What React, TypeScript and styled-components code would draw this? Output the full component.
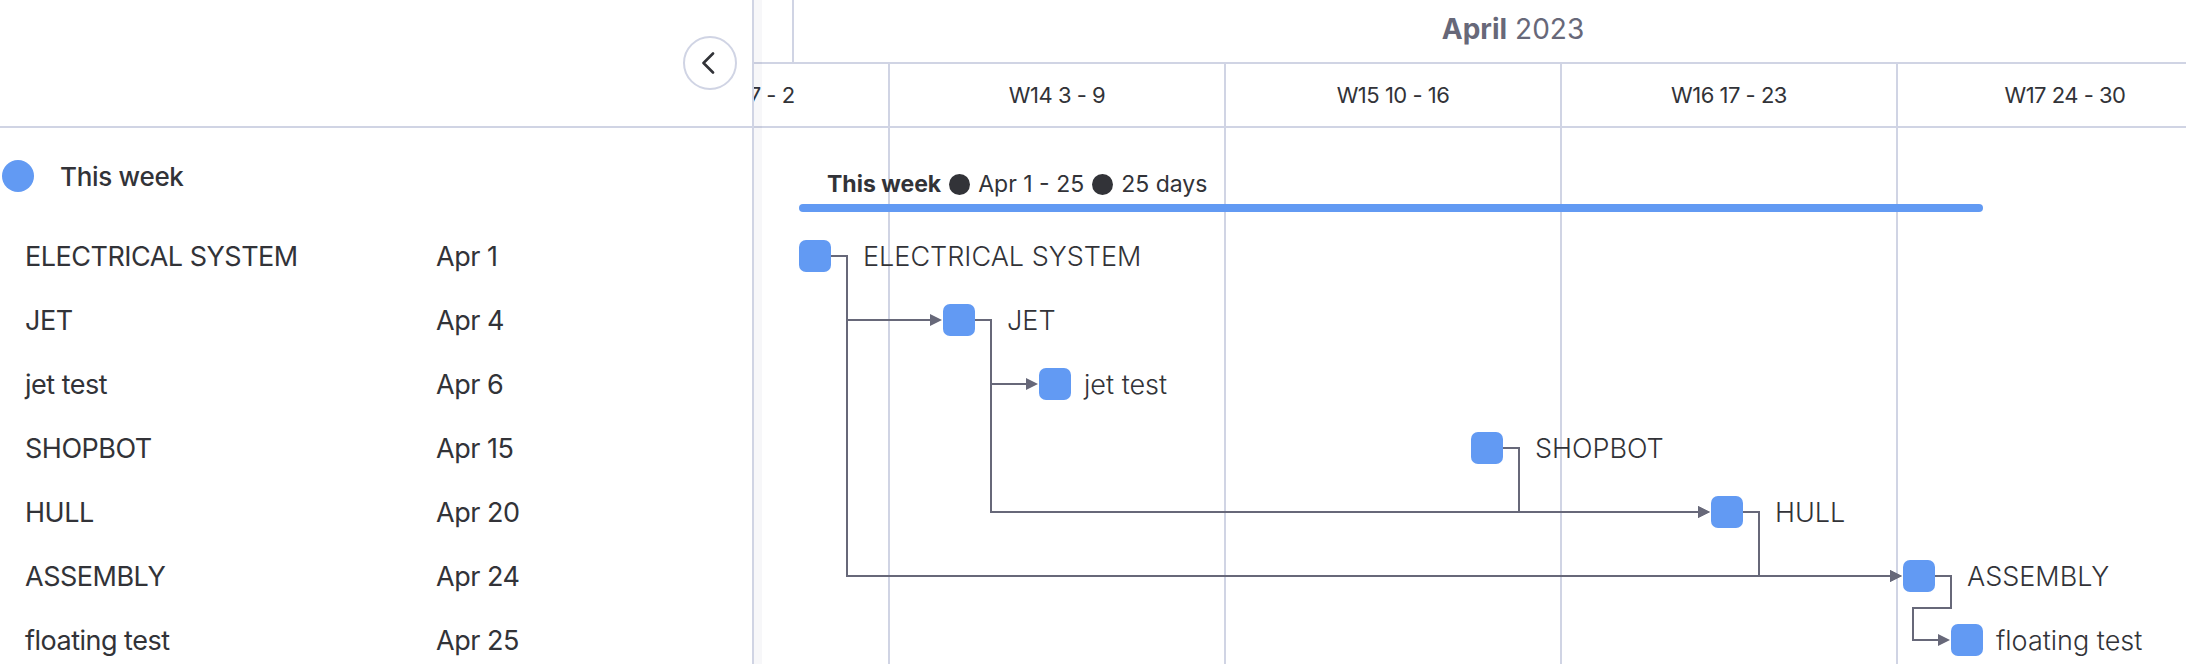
import React from 'react';
import styled, { createGlobalStyle } from 'styled-components';

const BORDER = '#d0d4e4';
const TEXT = '#323338';
const MUTED = '#676879';
const BLUE = '#629af3';
const LINK = '#676879';

const DAY = 48;
const WEEK = DAY * 7;
const GROUP_H = 96;
const ROW_H = 64;
const CANVAS_OFFSET = -202;

type Task = { name: string; date: string; day: number };

const tasks: Task[] = [
  { name: 'ELECTRICAL SYSTEM', date: 'Apr 1', day: 1 },
  { name: 'JET', date: 'Apr 4', day: 4 },
  { name: 'jet test', date: 'Apr 6', day: 6 },
  { name: 'SHOPBOT', date: 'Apr 15', day: 15 },
  { name: 'HULL', date: 'Apr 20', day: 20 },
  { name: 'ASSEMBLY', date: 'Apr 24', day: 24 },
  { name: 'floating test', date: 'Apr 25', day: 25 },
];

const links: [number, number][] = [
  [0, 1],
  [0, 5],
  [1, 2],
  [1, 4],
  [3, 4],
  [4, 5],
  [5, 6],
];

const weeks = ['W13 27 - 2', 'W14 3 - 9', 'W15 10 - 16', 'W16 17 - 23', 'W17 24 - 30'];

const boxLeft = (d: number) => (4 + d) * DAY + 7;
const BOX = 32;
const rowCy = (i: number) => GROUP_H + ROW_H * i + ROW_H / 2;

const GlobalStyle = createGlobalStyle`
  html, body {
    margin: 0;
    padding: 0;
    background: #ffffff;
    overflow: hidden;
  }
  body {
    font-family: Inter, "Noto Sans", sans-serif;
    color: ${TEXT};
  }
  * { box-sizing: border-box; }
`;

const Page = styled.div`
  display: flex;
  width: 100vw;
  height: 664px;
  overflow: hidden;
  background: #fff;
`;

const Sidebar = styled.aside`
  position: relative;
  z-index: 2;
  flex: 0 0 754px;
  width: 754px;
  border-right: 2px solid ${BORDER};
  background: #fff;

  &::after {
    content: '';
    position: absolute;
    top: 0;
    bottom: 0;
    right: -10px;
    width: 8px;
    background: rgba(40, 40, 80, 0.035);
  }
`;

const SidebarHeader = styled.div`
  height: 128px;
  border-bottom: 2px solid ${BORDER};
  display: flex;
  align-items: center;
  justify-content: flex-end;
  padding-right: 15px;
`;

const CollapseButton = styled.button`
  width: 54px;
  height: 54px;
  border-radius: 50%;
  border: 2px solid ${BORDER};
  background: #fff;
  display: flex;
  align-items: center;
  justify-content: center;
  padding: 0 5px 0 0;
  cursor: pointer;
`;

const GroupRow = styled.div`
  height: ${GROUP_H}px;
  display: flex;
  align-items: center;
  gap: 26px;
  padding-left: 2px;
`;

const GroupDot = styled.span`
  width: 32px;
  height: 32px;
  border-radius: 50%;
  background: ${BLUE};
  flex-shrink: 0;
`;

const GroupName = styled.span`
  font-size: 26px;
  font-weight: 500;
  letter-spacing: -0.3px;
  color: ${TEXT};
`;

const TaskRow = styled.div`
  height: ${ROW_H}px;
  display: grid;
  grid-template-columns: 411px auto;
  align-items: center;
  padding-left: 25px;
  font-size: 27px;
  letter-spacing: -0.5px;
  color: ${TEXT};
  white-space: nowrap;
`;

const Timeline = styled.section`
  position: relative;
  flex: 1;
  min-width: 0;
  overflow: hidden;
`;

const Canvas = styled.div`
  margin-left: ${CANVAS_OFFSET}px;
  width: ${WEEK * weeks.length}px;
`;

const MonthRow = styled.div`
  display: flex;
  height: 64px;
  border-bottom: 2px solid ${BORDER};
`;

const MonthCell = styled.div<{ $divider: boolean }>`
  flex-shrink: 0;
  display: flex;
  align-items: center;
  justify-content: center;
  padding-bottom: 4px;
  border-left: ${(p) => (p.$divider ? `2px solid ${BORDER}` : 'none')};
  font-size: 28px;
  color: ${MUTED};
  white-space: nowrap;

  b {
    font-weight: 700;
    margin-right: 8px;
  }
`;

const WeekRow = styled.div`
  display: flex;
  height: 64px;
  border-bottom: 2px solid ${BORDER};
`;

const WeekCell = styled.div<{ $shift?: number }>`
  flex: 0 0 ${WEEK}px;
  border-left: 2px solid ${BORDER};
  display: flex;
  align-items: center;
  justify-content: center;
  padding-left: ${(p) => p.$shift ?? 0}px;
  font-size: 22px;
  letter-spacing: -0.5px;
  color: ${TEXT};
  white-space: nowrap;
`;

const Body = styled.div`
  position: relative;
  height: 560px;
  background-image: repeating-linear-gradient(
    to right,
    ${BORDER} 0,
    ${BORDER} 2px,
    transparent 2px,
    transparent ${WEEK}px
  );
`;

const GanttGroupRow = styled.div`
  height: ${GROUP_H}px;
  display: flex;
  flex-direction: column;
  justify-content: flex-end;
  padding-bottom: 12px;
`;

const GroupSummary = styled.div`
  display: flex;
  align-items: center;
  gap: 8px;
  font-size: 23px;
  line-height: 28px;
  color: ${TEXT};
  white-space: nowrap;

  strong {
    font-weight: 700;
  }
`;

const SummaryDot = styled.span`
  width: 21px;
  height: 21px;
  border-radius: 50%;
  background: ${TEXT};
  flex-shrink: 0;
`;

const GroupBar = styled.div`
  height: 8px;
  margin-top: 6px;
  border-radius: 4px;
  background: ${BLUE};
`;

const GanttRow = styled.div`
  height: ${ROW_H}px;
  display: flex;
  align-items: center;
`;

const Milestone = styled.span`
  width: ${BOX}px;
  height: ${BOX}px;
  border-radius: 7px;
  background: ${BLUE};
  flex-shrink: 0;
`;

const MilestoneLabel = styled.span<{ $linked: boolean }>`
  margin-left: ${(p) => (p.$linked ? 32 : 13)}px;
  font-size: 27px;
  font-weight: 300;
  color: ${TEXT};
  white-space: nowrap;
`;

const LinkLayer = styled.svg`
  position: absolute;
  top: 0;
  left: 0;
  pointer-events: none;
  overflow: visible;
`;

const Chevron = () => (
  <svg width="14" height="22" viewBox="0 0 14 22" fill="none">
    <path d="M12 1.5 L2.5 11 L12 20.5" stroke={TEXT} strokeWidth="2.6" strokeLinecap="round" strokeLinejoin="round" />
  </svg>
);

function linkPath(a: number, b: number) {
  const sx = boxLeft(tasks[a].day) + BOX;
  const sy = rowCy(a);
  const tx = boxLeft(tasks[b].day);
  const ty = rowCy(b);
  const x1 = sx + 16;
  if (tx - x1 > 24) {
    return `M ${sx} ${sy} H ${x1} V ${ty} H ${tx - 12}`;
  }
  const midY = sy + ROW_H / 2;
  const backX = tx - 38;
  return `M ${sx} ${sy} H ${x1} V ${midY} H ${backX} V ${ty} H ${tx - 12}`;
}

function arrowHead(b: number) {
  const tx = boxLeft(tasks[b].day) - 1;
  const ty = rowCy(b);
  return `${tx - 12},${ty - 6} ${tx},${ty} ${tx - 12},${ty + 6}`;
}

const linkedFrom = new Set(links.map(([a]) => a));

export default function App() {
  const barLeft = boxLeft(tasks[0].day);
  const barRight = boxLeft(tasks[tasks.length - 1].day) + BOX;

  return (
    <>
      <GlobalStyle />
      <Page>
        <Sidebar>
          <SidebarHeader>
            <CollapseButton aria-label="Collapse">
              <Chevron />
            </CollapseButton>
          </SidebarHeader>
          <GroupRow>
            <GroupDot />
            <GroupName>This week</GroupName>
          </GroupRow>
          {tasks.map((t) => (
            <TaskRow key={t.name}>
              <span>{t.name}</span>
              <span>{t.date}</span>
            </TaskRow>
          ))}
        </Sidebar>

        <Timeline>
          <Canvas>
            <MonthRow>
              <MonthCell $divider={false} style={{ width: 5 * DAY }} />
              <MonthCell $divider style={{ width: 30 * DAY }}>
                <b>April</b>2023
              </MonthCell>
            </MonthRow>
            <WeekRow>
              {weeks.map((w, i) => (
                <WeekCell key={w} $shift={i === 0 ? 40 : 0}>
                  {w}
                </WeekCell>
              ))}
            </WeekRow>
            <Body>
              <GanttGroupRow>
                <GroupSummary style={{ marginLeft: barLeft + 28 }}>
                  <strong>This week</strong>
                  <SummaryDot />
                  <span>Apr 1 - 25</span>
                  <SummaryDot />
                  <span>25 days</span>
                </GroupSummary>
                <GroupBar style={{ marginLeft: barLeft, width: barRight - barLeft }} />
              </GanttGroupRow>
              {tasks.map((t, i) => (
                <GanttRow key={t.name} style={{ paddingLeft: boxLeft(t.day) }}>
                  <Milestone />
                  <MilestoneLabel $linked={linkedFrom.has(i)}>{t.name}</MilestoneLabel>
                </GanttRow>
              ))}
              <LinkLayer width={WEEK * weeks.length} height={560}>
                {links.map(([a, b]) => (
                  <g key={`${a}-${b}`}>
                    <path d={linkPath(a, b)} stroke={LINK} strokeWidth="2" fill="none" />
                    <polygon points={arrowHead(b)} fill={LINK} />
                  </g>
                ))}
              </LinkLayer>
            </Body>
          </Canvas>
        </Timeline>
      </Page>
    </>
  );
}
